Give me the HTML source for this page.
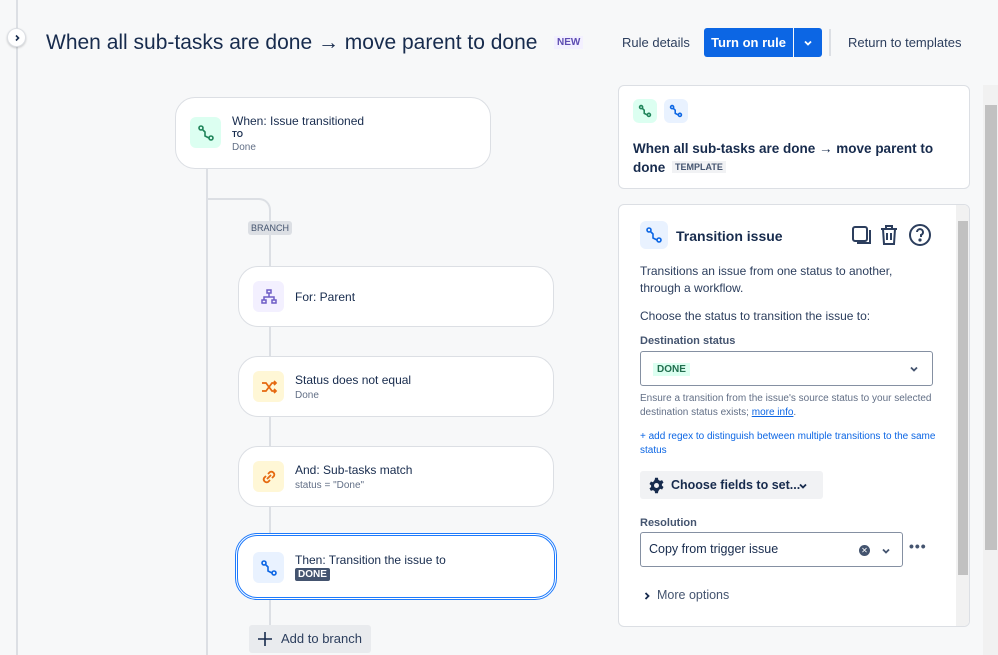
<!DOCTYPE html>
<html><head><meta charset="utf-8"><style>
*{box-sizing:border-box;margin:0;padding:0}
body{width:998px;height:655px;overflow:hidden;background:#f7f8f9;font-family:"Liberation Sans",sans-serif;color:#172b4d;position:relative}
.a{position:absolute}
.card{position:absolute;background:#fff;border:1px solid #dcdfe4;border-radius:20px}
.ic{position:absolute;width:31px;height:31px;border-radius:6px;display:flex;align-items:center;justify-content:center}
.t{position:absolute;font-size:12px;color:#172b4d}
.s{font-size:10px;color:#626f86}
.line{position:absolute;background:#dcdfe4}
</style></head><body>
<div class="line" style="left:16px;top:0;width:2px;height:655px"></div>
<div class="a" style="left:7px;top:28px;width:19px;height:19px;border-radius:50%;background:#fff;border:1px solid #dcdfe4;box-shadow:0 1px 2px rgba(0,0,0,.2)"><svg class="a" style="left:5px;top:5px" width="8" height="8" viewBox="0 0 8 8" fill="none" stroke="#172b4d" stroke-width="1.6"><path d="M3 1.5 5.5 4 3 6.5"/></svg></div>
<div class="a" style="left:46px;top:31px;font-size:21px;color:#172b4d">When all sub-tasks are done → move parent to done</div>
<div class="a" style="left:554px;top:36px;padding:1px 3px;background:#f3f0ff;color:#5e4db2;font-size:10px;font-weight:bold">NEW</div>
<div class="a" style="left:622px;top:35px;font-size:13px;color:#2c3e5d">Rule details</div>
<div class="a" style="left:704px;top:28px;width:89px;height:29px;background:#0c66e4;border-radius:3px 0 0 3px;color:#fff;font-size:13px;font-weight:bold;line-height:29px;text-align:center">Turn on rule</div>
<div class="a" style="left:794px;top:28px;width:28px;height:29px;background:#0c66e4;border-radius:0 3px 3px 0"><svg class="a" style="left:9px;top:10px" width="10" height="10" viewBox="0 0 10 10" fill="none" stroke="#fff" stroke-width="1.8"><path d="M2 3.5 5 6.5 8 3.5"/></svg></div>
<div class="line" style="left:829px;top:29px;width:2px;height:27px"></div>
<div class="a" style="left:848px;top:35px;font-size:13px;color:#2c3e5d">Return to templates</div>

<div class="line" style="left:206px;top:168px;width:2px;height:487px"></div>
<div class="a" style="left:207px;top:198px;width:64px;height:40px;border-top:2px solid #dcdfe4;border-right:2px solid #dcdfe4;border-top-right-radius:12px"></div>
<div class="line" style="left:269px;top:236px;width:2px;height:390px"></div>
<div class="a" style="left:248px;top:221px;padding:2px 3px;background:#dcdfe4;border-radius:3px;font-size:9px;color:#44546f">BRANCH</div>

<div class="card" style="left:175px;top:97px;width:316px;height:72px">
<div class="ic" style="left:14px;top:19px;background:#dcfff1"><svg width="18" height="18" viewBox="0 0 18 18" fill="none" stroke="#1f845a" stroke-width="1.6"><circle cx="4" cy="4" r="2"/><circle cx="14" cy="14" r="2"/><path d="M5.5 5.5 8 8v4l4 2"/></svg></div>
<div class="t" style="left:56px;top:16px">When: Issue transitioned</div>
<div class="t" style="left:56px;top:32px;font-size:8px;font-weight:bold">TO</div>
<div class="t s" style="left:56px;top:44px">Done</div></div>

<div class="card" style="left:238px;top:266px;width:316px;height:61px">
<div class="ic" style="left:14px;top:14px;background:#f3f0ff"><svg width="18" height="18" viewBox="0 0 18 18" fill="none" stroke="#6e5dc6" stroke-width="1.5"><rect x="7" y="2" width="4" height="3"/><rect x="2" y="12" width="4" height="3"/><rect x="12" y="12" width="4" height="3"/><path d="M9 5v4M4 12V9h10v3"/></svg></div>
<div class="t" style="left:56px;top:23px">For: Parent</div></div>

<div class="card" style="left:238px;top:356px;width:316px;height:61px">
<div class="ic" style="left:14px;top:14px;background:#fff7d6"><svg width="18" height="18" viewBox="0 0 18 18" fill="none" stroke="#e56910" stroke-width="1.7"><path d="M2 5h4l6 8h4M2 13h4l6-8h4M14 3l2 2-2 2M14 11l2 2-2 2"/></svg></div>
<div class="t" style="left:56px;top:16px">Status does not equal</div>
<div class="t s" style="left:56px;top:33px">Done</div></div>

<div class="card" style="left:238px;top:446px;width:316px;height:61px">
<div class="ic" style="left:14px;top:14px;background:#fff7d6"><svg width="18" height="18" viewBox="0 0 18 18" fill="none" stroke="#e56910" stroke-width="1.8"><path d="M8 6l2-2a3 3 0 0 1 4 4l-2 2M10 12l-2 2a3 3 0 0 1-4-4l2-2M7 11l4-4"/></svg></div>
<div class="t" style="left:56px;top:16px">And: Sub-tasks match</div>
<div class="t s" style="left:56px;top:33px">status = "Done"</div></div>

<div class="card" style="left:235px;top:533px;width:322px;height:67px;border:3px double #1d7afc;border-radius:22px">
<div class="ic" style="left:15px;top:16px;background:#e9f2ff"><svg width="18" height="18" viewBox="0 0 18 18" fill="none" stroke="#0c66e4" stroke-width="1.6"><circle cx="4" cy="4" r="2"/><circle cx="14" cy="14" r="2"/><path d="M5.5 5.5 8 8v4l4 2"/></svg></div>
<div class="t" style="left:57px;top:17px">Then: Transition the issue to</div>
<div class="a" style="left:57px;top:32px;padding:0 3px;background:#44546f;color:#fff;font-size:10px;font-weight:bold;border-radius:2px;line-height:13px">DONE</div></div>

<div class="a" style="left:249px;top:625px;width:122px;height:28px;background:#e9ebee;border-radius:3px;font-size:13px;color:#2c3e5d;line-height:28px"><svg class="a" style="left:8px;top:6px" width="16" height="16" viewBox="0 0 16 16" stroke="#172b4d" stroke-width="1.6"><path d="M8 1v14M1 8h14"/></svg><span style="position:absolute;left:32px">Add to branch</span></div>

<div class="card" style="left:618px;top:85px;width:352px;height:104px;border-radius:6px">
<div class="ic" style="left:14px;top:13px;width:24px;height:24px;background:#dcfff1"><svg width="14" height="14" viewBox="0 0 18 18" fill="none" stroke="#1f845a" stroke-width="2"><circle cx="4" cy="4" r="2"/><circle cx="14" cy="14" r="2"/><path d="M5.5 5.5 8 8v4l4 2"/></svg></div>
<div class="ic" style="left:45px;top:13px;width:24px;height:24px;background:#e9f2ff"><svg width="14" height="14" viewBox="0 0 18 18" fill="none" stroke="#0c66e4" stroke-width="2"><circle cx="4" cy="4" r="2"/><circle cx="14" cy="14" r="2"/><path d="M5.5 5.5 8 8v4l4 2"/></svg></div>
<div class="a" style="left:14px;top:53px;width:310px;font-size:13.5px;line-height:19px;font-weight:bold;color:#172b4d">When all sub-tasks are done → move parent to done <span style="font-size:9px;background:#f1f2f4;color:#44546f;padding:1px 3px;vertical-align:2px;margin-left:3px">TEMPLATE</span></div></div>

<div class="card" style="left:618px;top:204px;width:352px;height:423px;border-radius:6px;overflow:hidden">
<div class="a" style="left:337px;top:0;width:13px;height:421px;background:#f1f1f1"></div>
<div class="a" style="left:339px;top:16px;width:10px;height:354px;background:#c1c1c1"></div>
<div class="ic" style="left:21px;top:16px;width:28px;height:28px;background:#e9f2ff"><svg width="18" height="18" viewBox="0 0 18 18" fill="none" stroke="#0c66e4" stroke-width="1.6"><circle cx="4" cy="4" r="2"/><circle cx="14" cy="14" r="2"/><path d="M5.5 5.5 8 8v4l4 2"/></svg></div>
<div class="a" style="left:57px;top:23px;font-size:14px;font-weight:bold">Transition issue</div>
<svg class="a" style="left:232px;top:18px" width="84" height="24" viewBox="0 0 84 24" fill="none" stroke="#2c3e5d" stroke-width="2"><rect x="2" y="4" width="14" height="14" rx="2"/><path d="M19 7v13H6"/><path d="M30 6h16M35 6V3h6v3M32 6l1 15h10l1-15M36 10v7M40 10v7"/><circle cx="69" cy="12" r="10"/><path d="M66 9a3 3 0 1 1 4 3v2"/><circle cx="69" cy="17" r=".6" fill="#2c3e5d"/></svg>
<div class="a" style="left:21px;top:58px;width:275px;font-size:12px;line-height:17px;color:#2c3e5d">Transitions an issue from one status to another, through a workflow.</div>
<div class="a" style="left:21px;top:104px;font-size:12px;color:#2c3e5d">Choose the status to transition the issue to:</div>
<div class="a" style="left:21px;top:130px;font-size:11px;font-weight:bold;color:#44546f">Destination status</div>
<div class="a" style="left:21px;top:146px;width:293px;height:35px;border:1px solid #8590a2;border-radius:3px">
<span class="a" style="left:12px;top:11px;background:#dcfff1;color:#216e4e;font-size:10px;font-weight:bold;padding:1px 4px">DONE</span><svg class="a" style="left:268px;top:12px" width="10" height="10" viewBox="0 0 10 10" fill="none" stroke="#44546f" stroke-width="1.8"><path d="M2 3.5 5 6.5 8 3.5"/></svg></div>
<div class="a" style="left:21px;top:187px;width:300px;font-size:10px;line-height:14px;color:#626f86">Ensure a transition from the issue's source status to your selected destination status exists; <span style="color:#0c66e4;text-decoration:underline">more info</span>.</div>
<div class="a" style="left:21px;top:225px;width:300px;font-size:10px;line-height:14px;color:#0c66e4">+ add regex to distinguish between multiple transitions to the same status</div>
<div class="a" style="left:21px;top:266px;width:183px;height:28px;background:#f1f2f4;border-radius:3px;font-size:12.5px;font-weight:bold;color:#172b4d;line-height:28px;padding-left:31px">Choose fields to set...
<svg class="a" style="left:158px;top:10px" width="10" height="10" viewBox="0 0 10 10" fill="none" stroke="#172b4d" stroke-width="1.8"><path d="M2 3.5 5 6.5 8 3.5"/></svg>
<svg class="a" style="left:8px;top:6px" width="17" height="17" viewBox="0 0 24 24"><path fill="#172b4d" d="M10 1h4l.6 3 2.4 1.4 2.9-1 2 3.5-2.3 2a7 7 0 0 1 0 2.2l2.3 2-2 3.5-2.9-1L14.6 20 14 23h-4l-.6-3-2.4-1.4-2.9 1-2-3.5 2.3-2a7 7 0 0 1 0-2.2l-2.3-2 2-3.5 2.9 1L9.4 4z"/><circle cx="12" cy="12" r="3.5" fill="#f1f2f4"/></svg></div>
<div class="a" style="left:21px;top:312px;font-size:11px;font-weight:bold;color:#44546f">Resolution</div>
<div class="a" style="left:21px;top:327px;width:263px;height:35px;border:1px solid #8590a2;border-radius:3px;font-size:12.5px;line-height:33px;padding-left:8px;color:#172b4d">Copy from trigger issue
<span class="a" style="left:218px;top:12px;width:11px;height:11px;border-radius:50%;background:#44546f;color:#fff;font-size:8px;line-height:11px;text-align:center">✕</span><svg class="a" style="left:240px;top:13px" width="10" height="10" viewBox="0 0 10 10" fill="none" stroke="#44546f" stroke-width="1.8"><path d="M2 3.5 5 6.5 8 3.5"/></svg></div>
<div class="a" style="left:290px;top:333px;font-size:14px;font-weight:bold;color:#44546f;letter-spacing:1px">•••</div>
<svg class="a" style="left:24px;top:386px" width="8" height="10" viewBox="0 0 8 10" fill="none" stroke="#172b4d" stroke-width="1.8"><path d="M2.5 2 5.5 5 2.5 8"/></svg>
<div class="a" style="left:38px;top:383px;font-size:12.5px;color:#44546f">More options</div>
</div>

<div class="a" style="left:983px;top:85px;width:15px;height:570px;background:#f1f1f1"></div>
<div class="a" style="left:985px;top:105px;width:12px;height:445px;background:#c1c1c1"></div>
</body></html>
